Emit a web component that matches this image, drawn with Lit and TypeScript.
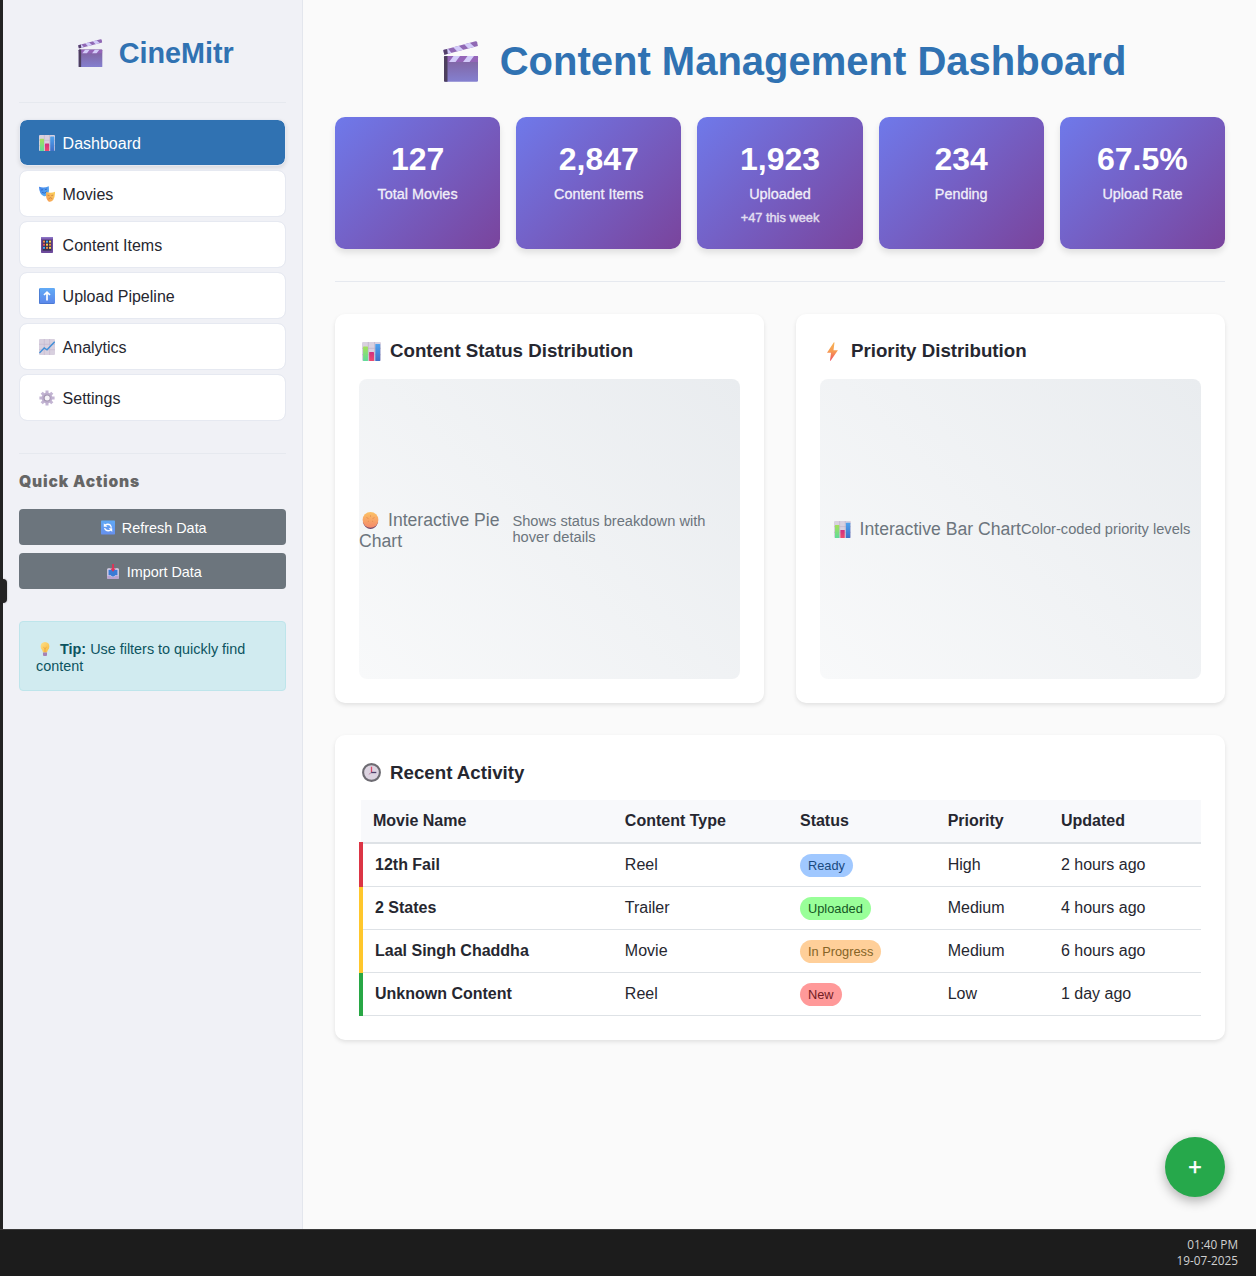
import { LitElement, html, css, svg, type TemplateResult } from "lit";
import { customElement, property } from "lit/decorators.js";
import { classMap } from "lit/directives/class-map.js";

type Glyph = { box: string; art: TemplateResult };

const bars: Glyph = {
  box: "0 0 16 16",
  art: svg`
    <defs>
      <linearGradient id="bg" x1="0" y1="0" x2="0" y2="1"><stop offset="0" stop-color="#a5e05a"/><stop offset="1" stop-color="#5fdc9a"/></linearGradient>
      <linearGradient id="bb" x1="0" y1="0" x2="0" y2="1"><stop offset="0" stop-color="#4fa3ee"/><stop offset="1" stop-color="#3f70c8"/></linearGradient>
      <linearGradient id="bp" x1="0" y1="0" x2="0" y2="1"><stop offset="0" stop-color="#d02f80"/><stop offset="1" stop-color="#ee4a6c"/></linearGradient>
    </defs>
    <rect width="16" height="16" rx="1" fill="#d9d1e0"/>
    <path d="M0 5.3H16M0 10.7H16M5.3 0V16M10.6 0V16" stroke="#bfb2c8" stroke-width=".6"/>
    <rect x=".9" y="3.8" width="4.1" height="12.2" rx=".5" fill="url(#bg)"/>
    <rect x="6" y="8.4" width="4.1" height="7.6" rx=".5" fill="url(#bp)"/>
    <rect x="11.2" y="1.6" width="4.1" height="14.4" rx=".5" fill="url(#bb)"/>`,
};

const glyphs: Record<string, Glyph> = {
  bars,
  clapper: {
    box: "0 0 36 41",
    art: svg`
      <defs>
        <linearGradient id="cl" x1="0" y1="0" x2="0" y2="1"><stop offset="0" stop-color="#80609a"/><stop offset="1" stop-color="#8480d0"/></linearGradient>
        <clipPath id="arm"><path d="M.3 8.9L32.5.3Q33.8 0 34.1 1.2L34.9 5 1.3 13.7Z"/></clipPath>
        <clipPath id="band"><rect x="1" y="15" width="34" height="6"/></clipPath>
      </defs>
      <g clip-path="url(#arm)">
        <rect width="36" height="15" fill="#9068b4"/>
        <path d="M-1 8L4 6.5 9 12.5 3 14ZM9.5 5.5L15 4 21 9.5 15 11.2ZM20.5 2.5L26 1 32 6.5 26 8.2Z" fill="#d3ccfa"/>
        <path d="M0 8L4 7.3 5 14H0Z" fill="#54406a"/>
      </g>
      <rect x="1" y="15" width="34" height="25.7" rx="1.2" fill="url(#cl)"/>
      <g clip-path="url(#band)">
        <rect x="1" y="15" width="34" height="6" fill="#9465b8"/>
        <path d="M10.5 15H17L12.5 21H6ZM24.5 15H31L26.5 21H20Z" fill="#d3ccfa"/>
      </g>
      <path d="M1 16Q1 15 2 15H4.5V40.7H2Q1 40.7 1 39.7Z" fill="#4d3f5e"/>`,
  },
  masks: {
    box: "0 0 16 16",
    art: svg`
      <defs>
        <linearGradient id="m1" x1="0" y1="0" x2="1" y2="1"><stop offset="0" stop-color="#3d7de8"/><stop offset="1" stop-color="#62b8f5"/></linearGradient>
        <linearGradient id="m2" x1="0" y1="1" x2="1" y2="0"><stop offset="0" stop-color="#f59a55"/><stop offset="1" stop-color="#fbd35a"/></linearGradient>
      </defs>
      <path d="M0 .8Q5 2.2 9.8.2 10.6 5.500 9 8.400 7.300 10.800 4.500 9.900.4 8.500 0 .8Z" fill="url(#m1)"/>
      <path d="M2 4l2-.3M6 3.600l2-.5M3 6.300Q5.500 8.300 7.800 5.700" fill="none" stroke="#2f62bd" stroke-width=".8"/>
      <path d="M7.300 6Q12 7.700 16 5.700 16.200 11 14.200 14 12 16.500 9.500 15.400 6.300 13 7.300 6Z" fill="url(#m2)"/>
      <path d="M8.500 9.200l2 .4M12.300 9.600l2-.5M9.500 13Q11.300 10.500 13.300 12.700" fill="none" stroke="#c97c3d" stroke-width=".8"/>`,
  },
  phone: {
    box: "0 0 16 16",
    art: svg`
      <rect x="2" y="0" width="12" height="16" rx=".8" fill="#6d4a9c"/>
      <rect x="2" y="0" width="12" height="1.600" fill="#8b74c4"/>
      <rect x="3.600" y="3" width="8.800" height="10.600" fill="#35304e"/>
      <g fill="#f08a4b"><rect x="4" y="3.600" width="2" height="2"/><rect x="10" y="6.700" width="2" height="2"/><rect x="7" y="9.800" width="2" height="2"/></g>
      <g fill="#3fa9f5"><rect x="7" y="3.600" width="2" height="2"/><rect x="4" y="9.800" width="2" height="2"/></g>
      <g fill="#f5d04e"><rect x="10" y="3.600" width="2" height="2"/><rect x="7" y="6.700" width="2" height="2"/><rect x="10" y="9.800" width="2" height="2"/></g>
      <rect x="4" y="6.700" width="2" height="2" fill="#e8555f"/>`,
  },
  up: {
    box: "0 0 16 16",
    art: svg`
      <defs><linearGradient id="ub" x1="0" y1="0" x2="0" y2="1"><stop offset="0" stop-color="#62abf6"/><stop offset="1" stop-color="#5b86ea"/></linearGradient></defs>
      <rect width="16" height="16" rx="1.2" fill="url(#ub)"/>
      <path d="M.4 1.200V14.600Q.4 15.600 1.400 15.600H14.800" fill="none" stroke="#4674c8" stroke-width=".8"/>
      <path d="M8 12.500V4.500M5 7L8 4.200 11 7" fill="none" stroke="#fff" stroke-width="1.700"/>`,
  },
  trend: {
    box: "0 0 16 16",
    art: svg`
      <rect width="16" height="16" rx="1" fill="#d8d0df"/>
      <path d="M0 5.3H16M0 10.7H16M5.3 0V16M10.6 0V16" stroke="#c2b6cc" stroke-width=".6"/>
      <path d="M.4 14L5.2 9 8 10.800 15.700 2.800" fill="none" stroke="#3f8fd8" stroke-width="1.400"/>`,
  },
  gear: {
    box: "0 0 16 16",
    art: svg`
      <g stroke="#c3b5d3" stroke-width="3"><path d="M8 .6V15.400M.4 8H15.600M2.700 2.700L13.300 13.300M13.300 2.700L2.700 13.300"/></g>
      <circle cx="8" cy="8" r="5.400" fill="#bdaecd"/>
      <circle cx="8" cy="8" r="3.500" fill="#a093ae"/>
      <circle cx="8.200" cy="8" r="2.500" fill="#f6f3f8"/>`,
  },
  refresh: {
    box: "0 0 16 16",
    art: svg`
      <defs><linearGradient id="rb" x1="0" y1="0" x2="0" y2="1"><stop offset="0" stop-color="#5fa9f5"/><stop offset="1" stop-color="#6690ee"/></linearGradient></defs>
      <rect width="16" height="16" rx=".8" fill="url(#rb)"/>
      <path d="M4.800 5.300Q8 3.300 10.600 5.300 11.700 6.500 11.700 8.300M11.200 10.900Q8 12.700 5.400 10.700 4.300 9.500 4.300 8.500" fill="none" stroke="#fff" stroke-width="1.500"/>
      <path d="M3.200 3V7.200H7.400ZM12.800 13V8.900H8.700Z" fill="#fff"/>`,
  },
  inbox: {
    box: "0 0 16 18",
    art: svg`
      <path d="M1 6.500Q1 5 2.500 5H13.500Q15 5 15 6.500V16.500Q15 18 13.500 18H2.500Q1 18 1 16.500Z" fill="#ddd2ea"/>
      <path d="M2.600 7H13.400V13.500H10.500L9.600 15H6.400L5.500 13.500H2.600Z" fill="#3a7bd5"/>
      <path d="M1 14H5L6 15.700H10L11 14H15V16.500Q15 18 13.500 18H2.500Q1 18 1 16.500Z" fill="#b9a3cf"/>
      <path d="M6.900 0H9.200V5.300H11.300L8 9.200 4.700 5.300H6.900Z" fill="#dc3558"/>`,
  },
  bulb: {
    box: "0 0 16 16",
    art: svg`
      <defs><linearGradient id="lb" x1="0" y1="0" x2="1" y2="1"><stop offset="0" stop-color="#fde08a"/><stop offset="1" stop-color="#f9b93c"/></linearGradient></defs>
      <path d="M8 0Q13 .3 13 5.200 13 7.600 11.200 9.500 10.500 10.500 10.400 12H5.600Q5.500 10.500 4.800 9.500 3 7.600 3 5.200 3 .3 8 0Z" fill="url(#lb)"/>
      <path d="M6.200 6L8 7.500 9.800 6M8 7.500V12" fill="none" stroke="#e99a2e" stroke-width=".8"/>
      <path d="M5.700 12H10.300V15Q10 16 8 16T5.700 15Z" fill="#a583b5"/>`,
  },
  bolt: {
    box: "0 0 19 19",
    art: svg`
      <defs><linearGradient id="zb" x1="0" y1="0" x2="0" y2="1"><stop offset="0" stop-color="#f6b354"/><stop offset=".5" stop-color="#f79a52"/><stop offset="1" stop-color="#ee4f60"/></linearGradient></defs>
      <path d="M10.900.2L4 10.700H8L7 18.600Q7.300 19 7.800 18.500L14.900 8.300H10.500L11.500.5Z" fill="url(#zb)"/>`,
  },
  pie: {
    box: "0 0 17 17",
    art: svg`
      <defs><linearGradient id="pb" x1="0" y1="0" x2="0" y2="1"><stop offset="0" stop-color="#fcc265"/><stop offset="1" stop-color="#f4896b"/></linearGradient></defs>
      <path d="M.8 10Q3 17 8.500 17T16.200 10Z" fill="#6c4468"/>
      <circle cx="8.500" cy="7.900" r="7.900" fill="url(#pb)"/>
      <path d="M4.500 5.500L6.500 6.600M12.500 5.500L10.500 6.600M8.500 3.300V4.800M5.800 9.700L7 9M11.200 9.700L10 9" stroke="#e08c50" stroke-width=".8"/>`,
  },
  clock: {
    box: "0 0 19 19",
    art: svg`
      <circle cx="9.500" cy="9.500" r="8.400" fill="#dcd3e0" stroke="#6d6b72" stroke-width="2.100"/>
      <path d="M9.500 3.700V9.500" stroke="#dc4a6a" stroke-width="1.300"/>
      <path d="M9 9.500H14.300" stroke="#4c3f6c" stroke-width="1.300"/>
      <path d="M9.500 9.500L6.800 11.300" stroke="#b06a8a" stroke-width=".7"/>`,
  },
};

@customElement("app-icon")
export class AppIcon extends LitElement {
  static styles = css`
    :host {
      display: inline-block;
      flex: none;
      line-height: 0;
    }
    .art {
      display: block;
      width: 100%;
      height: 100%;
    }
  `;

  @property() name = "bars";

  render() {
    const g = glyphs[this.name];
    return html`<svg class="art" viewBox=${g.box} aria-hidden="true">${g.art}</svg>`;
  }
}

const navItems = [
  { icon: "bars", label: "Dashboard" },
  { icon: "masks", label: "Movies" },
  { icon: "phone", label: "Content Items" },
  { icon: "up", label: "Upload Pipeline" },
  { icon: "trend", label: "Analytics" },
  { icon: "gear", label: "Settings" },
];

const stats = [
  { value: "127", label: "Total Movies" },
  { value: "2,847", label: "Content Items" },
  { value: "1,923", label: "Uploaded", note: "+47 this week" },
  { value: "234", label: "Pending" },
  { value: "67.5%", label: "Upload Rate" },
];

const activity = [
  { name: "12th Fail", type: "Reel", status: "Ready", tone: "ready", priority: "High", updated: "2 hours ago" },
  { name: "2 States", type: "Trailer", status: "Uploaded", tone: "uploaded", priority: "Medium", updated: "4 hours ago" },
  { name: "Laal Singh Chaddha", type: "Movie", status: "In Progress", tone: "progress", priority: "Medium", updated: "6 hours ago" },
  { name: "Unknown Content", type: "Reel", status: "New", tone: "new", priority: "Low", updated: "1 day ago" },
];

@customElement("app-root")
export class AppRoot extends LitElement {
  static styles = css`
    :host {
      display: flex;
      flex-direction: column;
      position: relative;
      height: 1276px;
      overflow: hidden;
      background: #fafafa;
      color: #262730;
      font: 16px "Liberation Sans", Arial, sans-serif;
    }
    * {
      box-sizing: border-box;
    }
    .workspace {
      flex: 1;
      display: flex;
      border-left: 3px solid #232323;
    }
    .handle {
      position: absolute;
      left: 0;
      top: 579px;
      width: 7px;
      height: 24px;
      border-radius: 0 4px 4px 0;
      background: #232323;
      box-shadow: 0 0 2px rgba(0, 0, 0, 0.3);
    }

    .sidebar {
      width: 300px;
      flex: none;
      padding: 0 16px;
      background: #f0f1f6;
      border-right: 1px solid #e3e6ed;
    }
    .brand {
      display: flex;
      align-items: center;
      justify-content: center;
      height: 103px;
      padding: 4px 0 0 7px;
      border-bottom: 1px solid #e6e9ef;
      color: #3072b2;
      font-size: 28.8px;
      font-weight: bold;
      gap: 15.5px;
    }
    .brand-text {
      margin-bottom: 0;
    }
    .brand-icon {
      width: 25px;
      height: 28.5px;
    }
    .nav {
      display: flex;
      flex-direction: column;
      gap: 4px;
      padding: 16px 0 32px;
      border-bottom: 1px solid #e6e9ef;
    }
    .nav-item {
      display: flex;
      align-items: center;
      gap: 7.6px;
      height: 47px;
      padding-left: 19px;
      background: #fff;
      background-clip: padding-box;
      border: 1px solid #e6e9f1;
      border-radius: 8px;
    }
    .nav-item.active {
      background: #3072b2;
      background-clip: padding-box;
      color: #fff;
      box-shadow: 0 2px 4px rgba(0, 0, 0, 0.1);
    }
    .nav-text {
      padding-top: 2px;
    }
    .nav-icon {
      width: 16px;
      height: 16px;
    }
    .quick-title {
      margin: 0;
      height: 55px;
      padding-top: 18px;
      font: 900 15.6px/20px Inter, "Liberation Sans", sans-serif;
      letter-spacing: 0.85px;
      color: #666;
    }
    .actions {
      display: flex;
      flex-direction: column;
      gap: 8px;
    }
    .action {
      display: flex;
      align-items: center;
      justify-content: center;
      gap: 6.5px;
      height: 36px;
      padding: 1px 0 0 3px;
      border: 0;
      border-radius: 4px;
      background: #6c757d;
      color: #fff;
      font: 14.4px "Liberation Sans", Arial, sans-serif;
    }
    .action-text {
      padding-top: 1px;
    }
    .action-icon {
      width: 14px;
      height: 15px;
    }
    .tip {
      margin-top: 32px;
      height: 70px;
      padding: 19px 16px 0;
      border: 1px solid #bee5eb;
      border-radius: 4px;
      background: #d1ebf0;
      color: #0c5460;
      font-size: 14.4px;
      line-height: 17px;
    }
    .tip-icon {
      width: 14px;
      height: 14px;
      margin: 0 4px 0 2px;
      vertical-align: -2px;
    }

    .main {
      flex: 1;
      padding: 0 31px 0 32px;
    }
    .title {
      display: flex;
      align-items: center;
      justify-content: center;
      gap: 21px;
      height: 117px;
      margin: 0;
      padding: 6px 0 0 9px;
      font-size: 40px;
      color: #3072b2;
    }
    .title-icon {
      width: 36px;
      height: 41px;
    }
    .title-text {
      white-space: nowrap;
    }
    .stats {
      display: grid;
      grid-template-columns: repeat(5, 1fr);
      gap: 16px;
      padding-bottom: 32px;
      border-bottom: 1px solid #e6e9ef;
    }
    .stat {
      height: 132px;
      padding-top: 24px;
      border-radius: 10px;
      background: linear-gradient(135deg, #6f79ea 0%, #7a449c 100%);
      box-shadow: 0 4px 6px rgba(0, 0, 0, 0.1);
      color: #fff;
      text-align: center;
    }
    .stat-value {
      font-size: 32px;
      font-weight: bold;
      line-height: 37px;
    }
    .stat-label {
      margin-top: 8px;
      font-size: 14.4px;
      line-height: 16px;
      opacity: 0.9;
      -webkit-text-stroke: 0.3px #fff;
    }
    .stat-note {
      margin-top: 8px;
      font-size: 12.8px;
      line-height: 15px;
      opacity: 0.8;
      -webkit-text-stroke: 0.4px #fff;
    }

    .charts {
      display: grid;
      grid-template-columns: 1fr 1fr;
      gap: 32px;
      padding: 32px 0;
    }
    .card {
      padding: 24px;
      border-radius: 10px;
      background: #fff;
      box-shadow: 0 2px 4px rgba(0, 0, 0, 0.1);
    }
    .card-title {
      display: flex;
      align-items: center;
      gap: 9px;
      height: 25px;
      margin: 0 0 16px;
      padding: 1px 0 0 3px;
      font-size: 18.72px;
    }
    .card-title.compact {
      padding-top: 2px;
    }
    .card-icon {
      width: 19px;
      height: 19px;
    }
    .chart {
      display: flex;
      align-items: center;
      justify-content: center;
      height: 300px;
      border-radius: 8px;
      background: linear-gradient(45deg, #f8f9fa, #e9ecef);
      color: #6c757d;
      font-size: 17.6px;
    }
    .chart-icon {
      width: 17px;
      height: 17px;
      margin: 0 9px 0 3px;
      vertical-align: -3px;
    }
    .chart-name.wrap {
      width: 153.4px;
      flex: none;
      padding-top: 3px;
      line-height: 21px;
    }
    .chart-hint {
      font-size: 14.667px;
      line-height: 16px;
    }

    .table {
      width: 100%;
      border-collapse: collapse;
      text-align: left;
    }
    .head {
      padding: 12px;
      line-height: 18px;
      background: #f8f9fb;
      border-bottom: 2px solid #dee2e6;
    }
    .cell {
      padding: 12px;
      line-height: 18px;
      border-bottom: 1px solid #dee2e6;
    }
    .row.high {
      border-left: 4px solid #dc3545;
    }
    .row.medium {
      border-left: 4px solid #ffc72c;
    }
    .row.low {
      border-left: 4px solid #28a745;
    }
    .badge {
      padding: 4px 8px;
      border-radius: 12px;
      font-size: 12.8px;
      line-height: 1;
    }
    .badge.ready {
      background: #a0c8ff;
      color: #1a4a80;
    }
    .badge.uploaded {
      background: #99ff99;
      color: #155724;
    }
    .badge.progress {
      background: #ffcf99;
      color: #856426;
    }
    .badge.new {
      background: #ff9999;
      color: #721c24;
    }

    .fab {
      position: absolute;
      left: 1165px;
      top: 1137px;
      width: 60px;
      height: 60px;
      padding: 0;
      border: 0;
      border-radius: 50%;
      background: #26a84b;
      color: #fff;
      font: 23px "Liberation Sans", Arial, sans-serif;
      -webkit-text-stroke: 0.5px #fff;
      box-shadow: 0 4px 12px rgba(0, 0, 0, 0.3);
    }
    .taskbar {
      flex: none;
      height: 47px;
      padding: 6px 18px 0 0;
      border-top: 1px solid #3a3a3a;
      background: #1c1c1c;
      color: #d0d0d0;
      font: 11.8px/16px "Open Sans", sans-serif;
      text-align: right;
    }
  `;

  render() {
    return html`
      <div class="workspace">
        <aside class="sidebar">
          <div class="brand">
            <app-icon class="brand-icon" name="clapper"></app-icon>
            <span class="brand-text">CineMitr</span>
          </div>
          <nav class="nav">
            ${navItems.map(
              (n, i) => html`<a class=${classMap({ "nav-item": true, active: i === 0 })}>
                <app-icon class="nav-icon" name=${n.icon}></app-icon><span class="nav-text">${n.label}</span>
              </a>`
            )}
          </nav>
          <h3 class="quick-title">Quick Actions</h3>
          <div class="actions">
            <button class="action"><app-icon class="action-icon" name="refresh"></app-icon><span class="action-text">Refresh Data</span></button>
            <button class="action"><app-icon class="action-icon" name="inbox"></app-icon><span class="action-text">Import Data</span></button>
          </div>
          <div class="tip">
            <app-icon class="tip-icon" name="bulb"></app-icon>
            <strong>Tip:</strong> <span>Use filters to quickly find</span><br /><span>content</span>
          </div>
        </aside>
        <main class="main">
          <h1 class="title">
            <app-icon class="title-icon" name="clapper"></app-icon>
            <span class="title-text">Content Management Dashboard</span>
          </h1>
          <section class="stats">
            ${stats.map(
              (s) => html`<div class="stat">
                <div class="stat-value">${s.value}</div>
                <div class="stat-label">${s.label}</div>
                ${s.note ? html`<div class="stat-note">${s.note}</div>` : null}
              </div>`
            )}
          </section>
          <section class="charts">
            <div class="card">
              <h3 class="card-title"><app-icon class="card-icon" name="bars"></app-icon>Content Status Distribution</h3>
              <div class="chart">
                <span class="chart-name wrap"><app-icon class="chart-icon" name="pie"></app-icon>Interactive Pie Chart</span>
                <span class="chart-hint">Shows status breakdown with hover details</span>
              </div>
            </div>
            <div class="card">
              <h3 class="card-title"><app-icon class="card-icon" name="bolt"></app-icon>Priority Distribution</h3>
              <div class="chart">
                <span class="chart-name"><app-icon class="chart-icon" name="bars"></app-icon>Interactive Bar Chart</span>
                <span class="chart-hint">Color-coded priority levels</span>
              </div>
            </div>
          </section>
          <section class="card">
            <h3 class="card-title compact"><app-icon class="card-icon" name="clock"></app-icon>Recent Activity</h3>
            <table class="table">
              <thead>
                <tr>
                  ${["Movie Name", "Content Type", "Status", "Priority", "Updated"].map(
                    (h) => html`<th class="head">${h}</th>`
                  )}
                </tr>
              </thead>
              <tbody>
                ${activity.map(
                  (r) => html`<tr class="row ${r.priority.toLowerCase()}">
                    <td class="cell"><strong>${r.name}</strong></td>
                    <td class="cell">${r.type}</td>
                    <td class="cell"><span class="badge ${r.tone}">${r.status}</span></td>
                    <td class="cell">${r.priority}</td>
                    <td class="cell">${r.updated}</td>
                  </tr>`
                )}
              </tbody>
            </table>
          </section>
        </main>
      </div>
      <footer class="taskbar">
        <div>01:40 PM</div>
        <div>19-07-2025</div>
      </footer>
      <div class="handle"></div>
      <button class="fab">+</button>
    `;
  }
}
